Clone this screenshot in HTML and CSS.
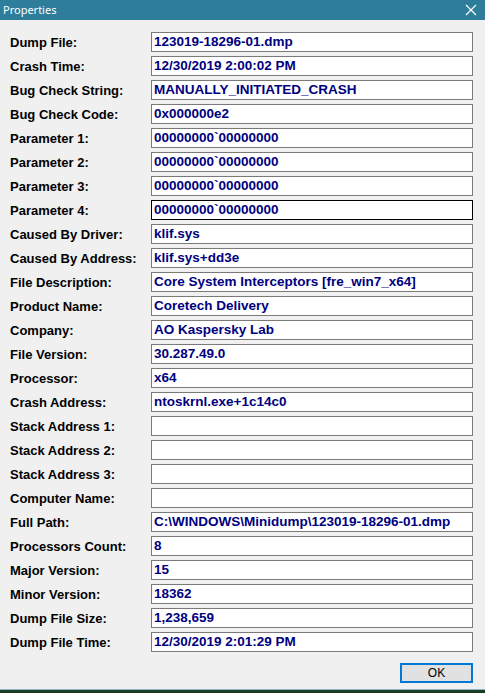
FILE: index.html
```html
<!DOCTYPE html>
<html>
<head>
<meta charset="utf-8">
<link rel="stylesheet" href="styles.css">
</head>
<body>
<div class="window">
  <div class="titlebar">
    <span class="title">Properties</span>
    <svg class="close" width="12" height="12" viewBox="0 0 12 12"><path d="M1 1L11 11M11 1L1 11" stroke="#fff" stroke-width="1.2" fill="none"/></svg>
  </div>
  <div class="content">
    <div class="row"><span class="label">Dump File:</span><span class="field">123019-18296-01.dmp</span></div>
    <div class="row"><span class="label">Crash Time:</span><span class="field">12/30/2019 2:00:02 PM</span></div>
    <div class="row"><span class="label">Bug Check String:</span><span class="field">MANUALLY_INITIATED_CRASH</span></div>
    <div class="row"><span class="label">Bug Check Code:</span><span class="field">0x000000e2</span></div>
    <div class="row"><span class="label">Parameter 1:</span><span class="field">00000000`00000000</span></div>
    <div class="row"><span class="label">Parameter 2:</span><span class="field">00000000`00000000</span></div>
    <div class="row"><span class="label">Parameter 3:</span><span class="field">00000000`00000000</span></div>
    <div class="row"><span class="label">Parameter 4:</span><span class="field focused">00000000`00000000</span></div>
    <div class="row"><span class="label">Caused By Driver:</span><span class="field">klif.sys</span></div>
    <div class="row"><span class="label">Caused By Address:</span><span class="field">klif.sys+dd3e</span></div>
    <div class="row"><span class="label">File Description:</span><span class="field">Core System Interceptors [fre_win7_x64]</span></div>
    <div class="row"><span class="label">Product Name:</span><span class="field">Coretech Delivery</span></div>
    <div class="row"><span class="label">Company:</span><span class="field">AO Kaspersky Lab</span></div>
    <div class="row"><span class="label">File Version:</span><span class="field">30.287.49.0</span></div>
    <div class="row"><span class="label">Processor:</span><span class="field">x64</span></div>
    <div class="row"><span class="label">Crash Address:</span><span class="field">ntoskrnl.exe+1c14c0</span></div>
    <div class="row"><span class="label">Stack Address 1:</span><span class="field"></span></div>
    <div class="row"><span class="label">Stack Address 2:</span><span class="field"></span></div>
    <div class="row"><span class="label">Stack Address 3:</span><span class="field"></span></div>
    <div class="row"><span class="label">Computer Name:</span><span class="field"></span></div>
    <div class="row"><span class="label">Full Path:</span><span class="field">C:\WINDOWS\Minidump\123019-18296-01.dmp</span></div>
    <div class="row"><span class="label">Processors Count:</span><span class="field">8</span></div>
    <div class="row"><span class="label">Major Version:</span><span class="field">15</span></div>
    <div class="row"><span class="label">Minor Version:</span><span class="field">18362</span></div>
    <div class="row"><span class="label">Dump File Size:</span><span class="field">1,238,659</span></div>
    <div class="row"><span class="label">Dump File Time:</span><span class="field">12/30/2019 2:01:29 PM</span></div>
    <div class="buttons"><button class="ok">OK</button></div>
  </div>
</div>
<div class="desktop"></div>
</body>
</html>
```
FILE: styles.css
```css
html, body {
  margin: 0;
  padding: 0;
}
body {
  width: 485px;
  height: 693px;
  overflow: hidden;
  background: #f0f0f0;
  display: flex;
  flex-direction: column;
}
.window {
  flex: 1;
  display: flex;
  flex-direction: column;
  background: #f0f0f0;
}
.titlebar {
  height: 20px;
  background: #2e7d9b;
  display: flex;
  align-items: center;
  justify-content: space-between;
  padding: 0 8px 0 3px;
}
.title {
  color: #fff;
  font-family: "Noto Sans", "Open Sans", sans-serif;
  font-size: 11px;
  line-height: 20px;
}
.close {
  display: block;
}
.content {
  padding: 12px 12px 0 10px;
  display: flex;
  flex-direction: column;
  gap: 4px;
}
.row {
  display: flex;
  align-items: center;
  height: 20px;
}
.label {
  width: 141px;
  flex: none;
  font-family: "Liberation Sans", Arial, sans-serif;
  font-weight: bold;
  font-size: 13px;
  color: #000;
}
.field {
  box-sizing: border-box;
  width: 323px;
  height: 20px;
  background: #fff;
  border: 1px solid #7a7a7a;
  padding: 0 2px;
  font-family: "Liberation Sans", Arial, sans-serif;
  font-weight: bold;
  font-size: 13.5px;
  line-height: 18px;
  color: #000080;
  white-space: nowrap;
  overflow: hidden;
}
.field.focused {
  border-color: #000;
}
.buttons {
  display: flex;
  justify-content: flex-end;
  margin-top: 7px;
}
.ok {
  box-sizing: border-box;
  width: 73px;
  height: 20px;
  background: #e1e1e1;
  border: 2px solid #0078d7;
  font-family: "Liberation Sans", Arial, sans-serif;
  font-size: 12px;
  color: #000;
  padding: 0;
  margin: 0;
}
.desktop {
  height: 3px;
  border-top: 1px solid #8fb7c8;
  background: #1d3a24;
}
```
